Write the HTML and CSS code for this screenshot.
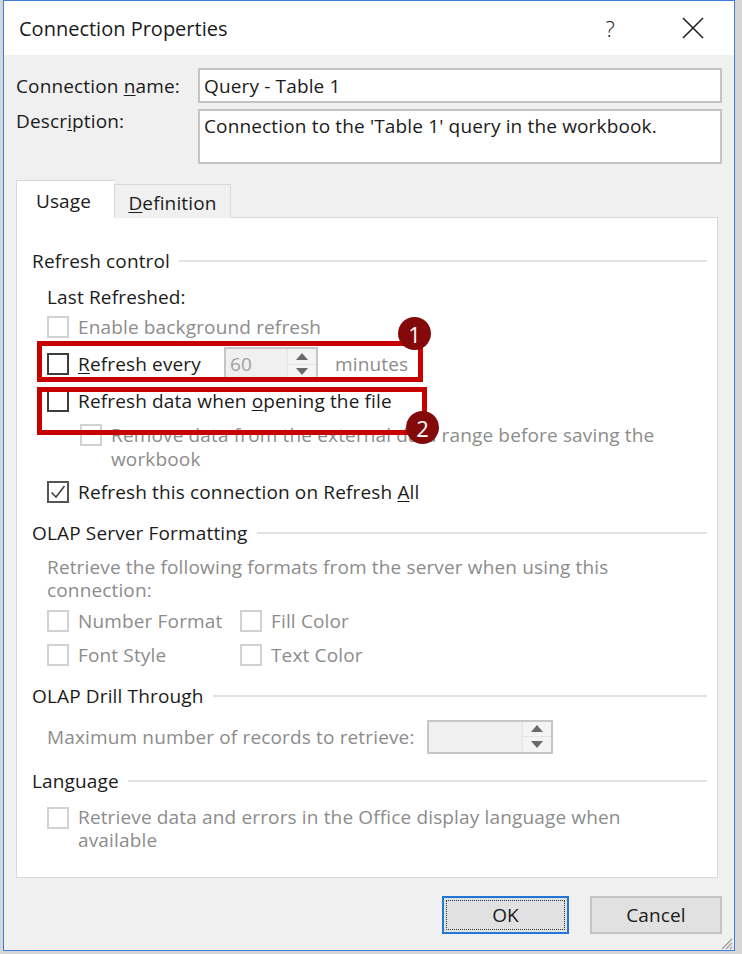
FILE: index.html
```html
<!DOCTYPE html>
<html>
<head>
<meta charset="utf-8">
<title>Connection Properties</title>
<link rel="stylesheet" href="styles.css">
</head>
<body>
<div class="window">
  <div class="titlebar">
    <span class="title">Connection Properties</span>
    <span class="help">?</span>
    <svg class="close" width="22" height="22" viewBox="0 0 22 22"><path d="M1 1 L21 21 M21 1 L1 21" stroke="#222" stroke-width="1.6" fill="none"/></svg>
  </div>
  <div class="dlg">
    <div class="field">
      <span class="field-label">Connection <u>n</u>ame:</span>
      <div class="input">Query - Table 1</div>
    </div>
    <div class="field field-desc">
      <span class="field-label">Descr<u>i</u>ption:</span>
      <div class="input textarea">Connection to the 'Table 1' query in the workbook.</div>
    </div>
    <div class="tabs">
      <div class="tab tab-active">Usa<u>g</u>e</div>
      <div class="tab"><u>D</u>efinition</div>
    </div>
    <div class="panel">
      <div class="group-head head-refresh"><span>Refresh control</span><i></i></div>
      <div class="row row-last">Last Refreshed:</div>
      <div class="row row-bg disabled"><span class="cb cb-dis"></span><span>Enable background refresh</span></div>
      <div class="row row-every">
        <span class="cb"></span><span class="every-label"><u>R</u>efresh every</span>
        <span class="spin spin-small"><span class="spin-val">60</span><span class="spin-btns"><b class="up"></b><b class="down"></b></span></span>
        <span class="minutes">minutes</span>
      </div>
      <div class="row row-open"><span class="cb"></span><span>Refresh data when <u>o</u>pening the file</span></div>
      <div class="row row-remove disabled"><span class="cb cb-dis"></span><span class="wrap-text">Remove data from the external data range before saving the workbook</span></div>
      <div class="row row-all"><span class="cb cb-checked"><svg width="18" height="18" viewBox="0 0 18 18"><path d="M2.5 9.5 L7 14 L15.5 3" stroke="#444" stroke-width="1.6" fill="none"/></svg></span><span>Refresh this connection on Refresh <u>A</u>ll</span></div>

      <div class="group-head head-olap"><span>OLAP Server Formatting</span><i></i></div>
      <div class="row row-retrieve disabled">Retrieve the following formats from the server when using this<br>connection:</div>
      <div class="grid-row row-fmt1 disabled">
        <span class="opt"><span class="cb cb-dis"></span><span>Number Format</span></span>
        <span class="opt"><span class="cb cb-dis"></span><span>Fill Color</span></span>
      </div>
      <div class="grid-row row-fmt2 disabled">
        <span class="opt"><span class="cb cb-dis"></span><span>Font Style</span></span>
        <span class="opt"><span class="cb cb-dis"></span><span>Text Color</span></span>
      </div>

      <div class="group-head head-drill"><span>OLAP Drill Through</span><i></i></div>
      <div class="row row-max disabled">
        <span class="max-label">Maximum number of records to retrieve:</span>
        <span class="spin spin-wide"><span class="spin-val"></span><span class="spin-btns"><b class="up"></b><b class="down"></b></span></span>
      </div>

      <div class="group-head head-lang"><span>Language</span><i></i></div>
      <div class="row row-lang disabled"><span class="cb cb-dis"></span><span class="wrap-text">Retrieve data and errors in the Office display language when<br>available</span></div>
    </div>
    <div class="buttons">
      <div class="btn btn-default"><span>OK</span></div>
      <div class="btn">Cancel</div>
    </div>
    <svg class="grip" width="14" height="14" viewBox="0 0 14 14"><path d="M13 3 L3 13 M13 7 L7 13 M13 11 L11 13" stroke="#9a9a9a" stroke-width="1.2"/></svg>
  </div>
</div>

<div class="mark-box box-one"></div>
<div class="mark-box box-two"></div>
<div class="badge badge-one">1</div>
<div class="badge badge-two">2</div>
</body>
</html>
```

FILE: styles.css
```css
* { box-sizing: border-box; }
html, body { margin: 0; padding: 0; }
body {
  background: #d6d6d6;
  width: 742px;
  height: 954px;
  overflow: hidden;
  position: relative;
  font-family: "Open Sans", "Noto Sans", "DejaVu Sans", sans-serif;
  font-size: 19px;
  letter-spacing: 0.15px;
  color: #1b1b1b;
}
u { text-decoration: underline; text-underline-offset: 2px; text-decoration-thickness: 1px; }

.window {
  margin-left: 3px;
  width: 732px;
  height: 951px;
  border: 1px solid #3b7fd8;
  background: #f0f0f0;
  position: relative;
}

.titlebar {
  height: 54px;
  background: #ffffff;
  display: flex;
  align-items: center;
  padding-left: 15px;
}
.title { font-size: 20px; color: #1a1a1a; flex: 1; letter-spacing: 0; }
.help { font-size: 22px; color: #222; margin-right: 67px; font-weight: 300; }
.close { margin-right: 30px; }

.dlg { padding: 13px 12px 0 12px; position: relative; height: 896px; }

.field { display: flex; align-items: center; }
.field-label { width: 182px; flex: none; }
.input {
  flex: 1;
  height: 35px;
  background: #fff;
  border: 2px solid #c3c3c3;
  padding-left: 4px;
  display: flex;
  align-items: center;
}
.field-desc { margin-top: 6px; align-items: flex-start; }
.field-desc .field-label { margin-top: -1px; }
.textarea { height: 55px; align-items: flex-start; padding-top: 2px; }

.tabs { display: flex; align-items: flex-end; margin-top: 16px; height: 38px; }
.tab {
  height: 34px;
  width: 117px;
  border: 1px solid #d9d9d9;
  border-bottom: none;
  background: #f0f0f0;
  display: flex;
  align-items: center;
  justify-content: center;
  padding-top: 2px;
}
.tab-active {
  height: 38px;
  width: 98px;
  background: #fff;
  position: relative;
  z-index: 2;
  padding-top: 2px;
  padding-right: 4px;
  border-right: none;
}

.panel {
  width: 702px;
  height: 661px;
  margin-top: -1px;
  background: #fff;
  border: 1px solid #d9d9d9;
  padding: 31px 10px 0 15px;
}

.group-head { display: flex; align-items: center; height: 24px; }
.group-head i { flex: 1; height: 2px; background: #e2e2e2; margin-left: 9px; }
.head-olap { margin-top: 17px; }
.head-drill { margin-top: 17px; }
.head-lang { margin-top: 15px; }

.row { display: flex; align-items: center; height: 24px; padding-left: 15px; }
.disabled { color: #8c8c8c; }
.row-last { margin-top: 12px; }
.row-bg { margin-top: 6px; }
.row-every { margin-top: 8px; height: 34px; }
.row-open { margin-top: 8px; }
.row-remove { margin-top: 10px; height: auto; align-items: flex-start; padding-left: 48px; line-height: 24px; }
.row-remove .wrap-text { width: 570px; }
.row-all { margin-top: 9px; }
.row-retrieve { margin-top: 11px; height: auto; display: block; line-height: 23px; }
.row-max { margin-top: 11px; height: 35px; }
.row-lang { margin-top: 13px; height: auto; align-items: flex-start; line-height: 23px; }

.cb {
  width: 22px; height: 22px; flex: none;
  border: 2px solid #3d3d3d;
  background: #fff;
  margin-right: 9px;
  display: inline-flex;
  align-items: center;
  justify-content: center;
}
.cb-dis { border-color: #d2d2d2; }
.row-remove .cb, .row-lang .cb { margin-top: 1px; }
.cb-checked { border-color: #555; }

.every-label { width: 146px; }
.spin {
  display: inline-flex;
  border: 2px solid #c6c6c6;
  background: #f0f0f0;
  height: 34px;
}
.spin-small { width: 94px; }
.spin-wide { width: 126px; margin-left: 12px; }
.spin-val { flex: 1; color: #a0a0a0; padding-left: 4px; display: flex; align-items: center; }
.spin-btns {
  width: 29px;
  display: flex;
  flex-direction: column;
  border-left: 1px solid #e4e4e4;
  background: #f4f4f4;
}
.spin-btns b {
  flex: 1;
  display: flex;
  align-items: center;
  justify-content: center;
}
.spin-btns b + b { border-top: 1px solid #e4e4e4; }
.spin-btns b::before {
  content: "";
  width: 0; height: 0;
  border-left: 6px solid transparent;
  border-right: 6px solid transparent;
}
.up::before { border-bottom: 7px solid #6a6a6a; }
.down::before { border-top: 7px solid #6a6a6a; }
.minutes { color: #8c8c8c; margin-left: 17px; }

.grid-row { display: flex; height: 24px; padding-left: 15px; }
.grid-row .opt { display: flex; align-items: center; }
.grid-row .opt:first-child { width: 193px; }
.row-fmt1 { margin-top: 7px; }
.row-fmt2 { margin-top: 10px; }

.buttons {
  display: flex;
  justify-content: flex-end;
  gap: 21px;
  margin-top: 18px;
  padding-right: 0;
}
.btn {
  height: 38px;
  width: 132px;
  border: 2px solid #c4c4c4;
  background: #e1e1e1;
  display: flex;
  align-items: center;
  justify-content: center;
}
.btn-default {
  width: 127px;
  border: 2px solid #2477d7;
  padding: 2px;
}
.btn-default span {
  width: 100%; height: 100%;
  border: 1px dotted #333;
  display: flex;
  align-items: center;
  justify-content: center;
}
.grip { position: absolute; right: 1px; bottom: 1px; }

.mark-box {
  position: absolute;
  border: 5px solid #c80000;
}
.box-one { left: 37px; top: 341px; width: 386px; height: 41px; }
.box-two { left: 37px; top: 387px; width: 390px; height: 48px; }
.badge {
  position: absolute;
  width: 33px; height: 33px;
  border-radius: 50%;
  background: #840a0a;
  color: #fff;
  font-size: 22px;
  letter-spacing: 0;
  display: flex;
  align-items: center;
  justify-content: center;
  font-family: "Open Sans", sans-serif;
}
.badge-one { left: 398px; top: 317px; }
.badge-two { left: 406px; top: 411px; }
```
